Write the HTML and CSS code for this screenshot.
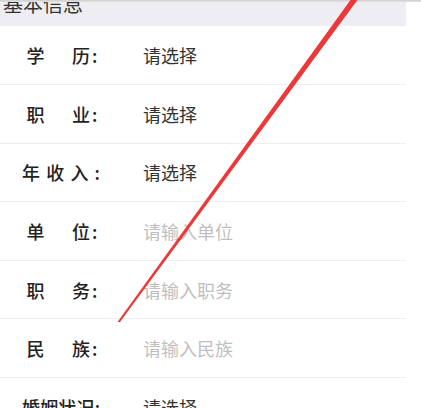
FILE: index.html
```html
<!DOCTYPE html>
<html lang="zh-CN">
<head>
<meta charset="utf-8">
<title>基本信息</title>
<link rel="stylesheet" href="styles.css">
</head>
<body>
<div class="page">
  <div class="topbar"></div>
  <div class="list">
    <div class="section-head"><span class="section-title">基本信息</span></div>
    <div class="row">
      <div class="label pair"><span>学</span><span class="second">历</span><span class="colon">:</span></div>
      <div class="value">请选择</div>
    </div>
    <div class="row">
      <div class="label pair"><span>职</span><span class="second">业</span><span class="colon">:</span></div>
      <div class="value">请选择</div>
    </div>
    <div class="row">
      <div class="label wide"><span>年</span><span>收</span><span>入</span><span>:</span></div>
      <div class="value">请选择</div>
    </div>
    <div class="row">
      <div class="label pair"><span>单</span><span class="second">位</span><span class="colon">:</span></div>
      <div class="value placeholder">请输入单位</div>
    </div>
    <div class="row">
      <div class="label pair"><span>职</span><span class="second">务</span><span class="colon">:</span></div>
      <div class="value placeholder">请输入职务</div>
    </div>
    <div class="row">
      <div class="label pair"><span>民</span><span class="second">族</span><span class="colon">:</span></div>
      <div class="value placeholder">请输入民族</div>
    </div>
    <div class="row">
      <div class="label wide"><span>婚</span><span>姻</span><span>状</span><span>况</span><span>:</span></div>
      <div class="value">请选择</div>
    </div>
  </div>
  <svg class="stroke" width="421" height="408" viewBox="0 0 421 408" aria-hidden="true">
    <polygon points="350.5,0 357.5,0 120,322 117.5,322" fill="#ec3838"/>
  </svg>
</div>
</body>
</html>
```

FILE: styles.css
```css
html, body {
  margin: 0;
  padding: 0;
  background: #ffffff;
}

body {
  font-family: "Noto Sans CJK SC", "Noto Sans", sans-serif;
  width: 421px;
  height: 408px;
  overflow: hidden;
}

.page {
  position: relative;
  width: 421px;
  height: 408px;
  overflow: hidden;
}

.topbar {
  height: 2px;
  background: linear-gradient(#cfcfcf, #e2e2e2);
}

.list {
  width: 406px;
}

.section-head {
  height: 24.4px;
  background: #eeeef2;
  overflow: hidden;
  padding-left: 3px;
}

.section-title {
  display: block;
  margin-top: -8px;
  font-size: 20px;
  line-height: 20px;
  color: #333333;
}

.row {
  height: 57.6px;
  border-bottom: 1px solid #efefef;
  display: flex;
  align-items: center;
  font-size: 18px;
  line-height: 18px;
}

.label {
  display: flex;
  width: 78px;
  margin-left: 22px;
  color: #222222;
  font-weight: 500;
}

.label.wide {
  justify-content: space-between;
}

.label.pair {
  padding-left: 4.5px;
  box-sizing: border-box;
}

.label.pair .second {
  margin-left: 27.5px;
}

.label.pair .colon {
  margin-left: 2px;
}

.value {
  margin-left: 43px;
  color: #333333;
}

.value.placeholder {
  color: #bfbfbf;
}

.stroke {
  position: absolute;
  left: 0;
  top: 0;
  pointer-events: none;
}
```
